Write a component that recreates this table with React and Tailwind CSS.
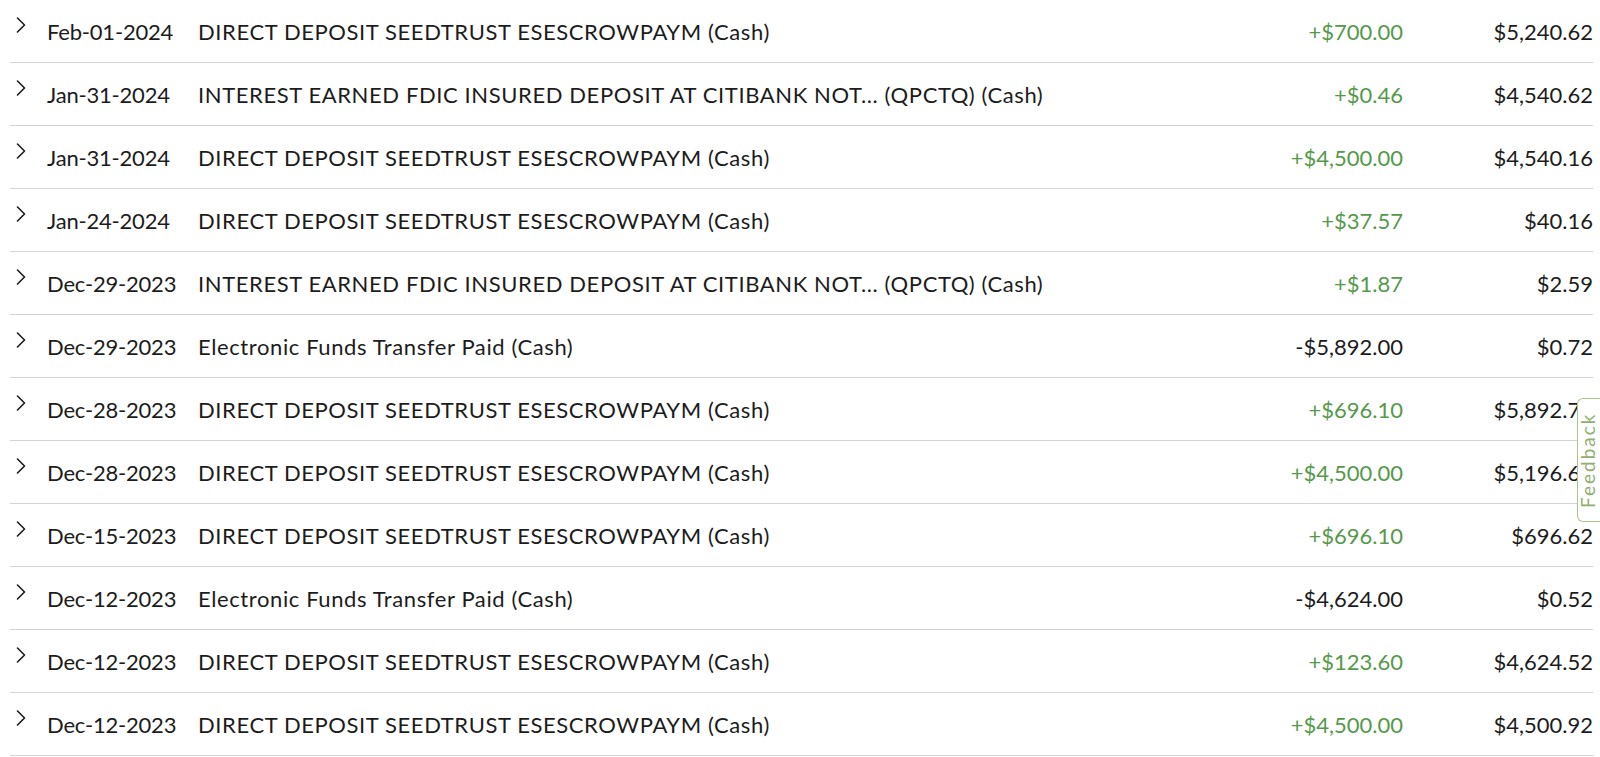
const rows = [
  { date: 'Feb-01-2024', desc: 'DIRECT DEPOSIT SEEDTRUST ESESCROWPAYM (Cash)', amount: '+$700.00', balance: '$5,240.62' },
  { date: 'Jan-31-2024', desc: 'INTEREST EARNED FDIC INSURED DEPOSIT AT CITIBANK NOT... (QPCTQ) (Cash)', amount: '+$0.46', balance: '$4,540.62' },
  { date: 'Jan-31-2024', desc: 'DIRECT DEPOSIT SEEDTRUST ESESCROWPAYM (Cash)', amount: '+$4,500.00', balance: '$4,540.16' },
  { date: 'Jan-24-2024', desc: 'DIRECT DEPOSIT SEEDTRUST ESESCROWPAYM (Cash)', amount: '+$37.57', balance: '$40.16' },
  { date: 'Dec-29-2023', desc: 'INTEREST EARNED FDIC INSURED DEPOSIT AT CITIBANK NOT... (QPCTQ) (Cash)', amount: '+$1.87', balance: '$2.59' },
  { date: 'Dec-29-2023', desc: 'Electronic Funds Transfer Paid (Cash)', amount: '-$5,892.00', balance: '$0.72' },
  { date: 'Dec-28-2023', desc: 'DIRECT DEPOSIT SEEDTRUST ESESCROWPAYM (Cash)', amount: '+$696.10', balance: '$5,892.72' },
  { date: 'Dec-28-2023', desc: 'DIRECT DEPOSIT SEEDTRUST ESESCROWPAYM (Cash)', amount: '+$4,500.00', balance: '$5,196.62' },
  { date: 'Dec-15-2023', desc: 'DIRECT DEPOSIT SEEDTRUST ESESCROWPAYM (Cash)', amount: '+$696.10', balance: '$696.62' },
  { date: 'Dec-12-2023', desc: 'Electronic Funds Transfer Paid (Cash)', amount: '-$4,624.00', balance: '$0.52' },
  { date: 'Dec-12-2023', desc: 'DIRECT DEPOSIT SEEDTRUST ESESCROWPAYM (Cash)', amount: '+$123.60', balance: '$4,624.52' },
  { date: 'Dec-12-2023', desc: 'DIRECT DEPOSIT SEEDTRUST ESESCROWPAYM (Cash)', amount: '+$4,500.00', balance: '$4,500.92' },
];

function Chevron() {
  return (
    <svg width="10" height="16" viewBox="0 0 10 16" fill="none">
      <path d="M1.5 1 L8.5 8 L1.5 15" stroke="#1c1c1c" strokeWidth="1.6" strokeLinecap="round" strokeLinejoin="round" />
    </svg>
  );
}

export default function App() {
  return (
    <div className="relative h-[757px] w-[1600px] overflow-hidden bg-white text-[#1c1c1c] font-['Lato','Open_Sans',sans-serif]">
      <div className="ml-[10px] mr-[7px]">
        {rows.map((r, i) => (
          <div key={i} className="flex h-[63px] items-center border-b border-[#d4d4d4] text-[22px]">
            <div className="flex w-[37px] shrink-0 self-start pt-[17px] pl-[6px]">
              <Chevron />
            </div>
            <div className="w-[151px] shrink-0 tracking-[-0.2px]">{r.date}</div>
            <div className="flex-1 truncate tracking-[0.6px]">{r.desc}</div>
            <div className={`w-[200px] text-right ${r.amount.startsWith('+') ? 'text-[#55994a]' : ''}`}>{r.amount}</div>
            <div className="w-[190px] shrink-0 text-right">{r.balance}</div>
          </div>
        ))}
      </div>

      {/* Feedback tab */}
      <div className="absolute right-0 top-[398px] flex h-[124px] w-[23px] items-center justify-center rounded-l-[6px] border-[1.5px] border-r-0 border-[#a9c590] bg-white">
        <span className="-rotate-90 whitespace-nowrap text-[19px] tracking-[2px] text-[#8fb070]">Feedback</span>
      </div>
    </div>
  );
}
